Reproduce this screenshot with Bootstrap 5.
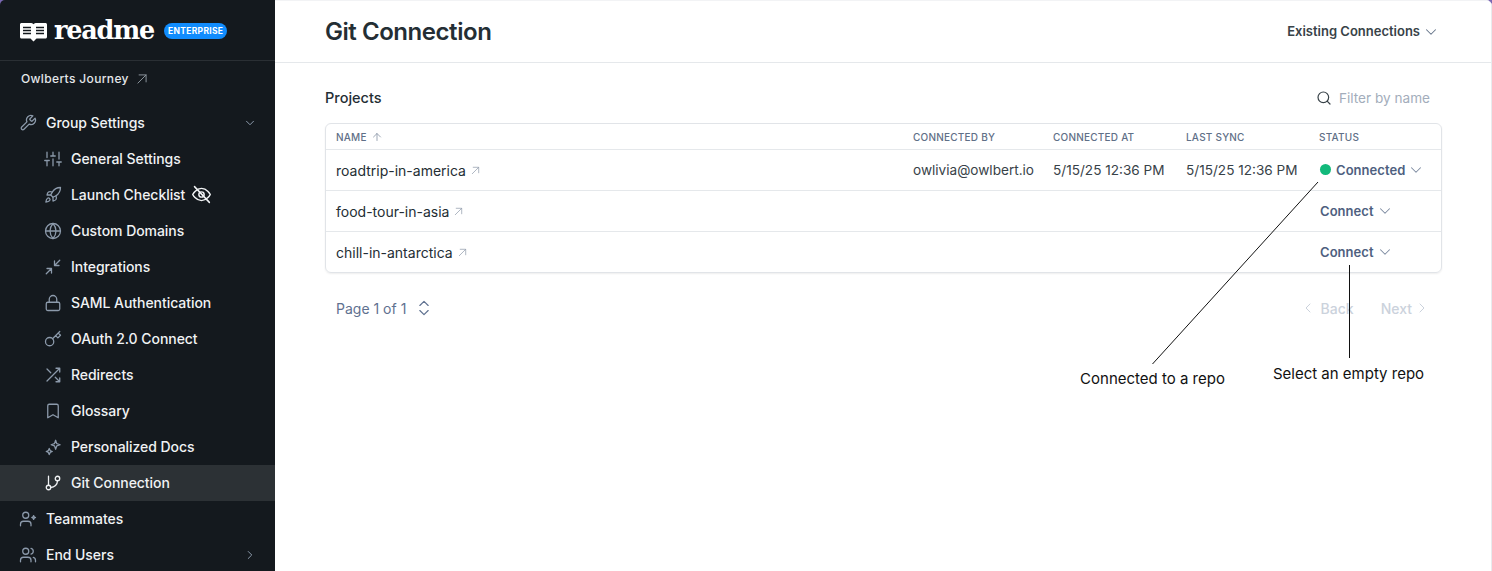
<!DOCTYPE html>
<html lang="en">
<head>
<meta charset="utf-8">
<title>Git Connection</title>
<link href="https://cdn.jsdelivr.net/npm/bootstrap@5.3.0/dist/css/bootstrap.min.css" rel="stylesheet">
<style>
html,body{height:100%;overflow:hidden}
body{background:#7a68b3;font-family:Inter,"Liberation Sans",sans-serif;color:#242e34}
.ico{width:18px;height:18px;fill:none;stroke:currentColor;stroke-width:1.7;stroke-linecap:round;stroke-linejoin:round;flex:none}
.shell{height:571px;border-top-right-radius:6px;border-top-left-radius:5px;overflow:hidden}
.side{width:275px;flex:none;background:#14191e;color:#f0f2f4}
.brandbar{height:61px;padding:3px 20px 0;border-bottom:1px solid #2a2f34;flex:none}
.wordmark{font-family:"DejaVu Serif",serif;font-weight:700;font-size:25.5px;line-height:1;color:#fff;letter-spacing:-1.2px;margin-left:7px;margin-top:-2px}
.entpill{background:#118cfd;font-size:8.5px;font-weight:700;letter-spacing:.3px;padding:4px;margin-left:10px;line-height:8px;margin-top:-2px}
.grouplink{height:44px;padding:0 21px 9px;font-size:12px;font-weight:500;letter-spacing:.35px;color:#e4e7ea;flex:none}
.grouplink .ico{width:14px;height:14px;color:#8b949c;margin-left:6px}
.sidenav{flex:none}
.sideitem{height:36px;font-size:14px;font-weight:500;color:#f0f2f4;text-decoration:none;padding:0 18px 1px 19px;gap:9px;letter-spacing:-.05px}
.sideitem:hover{color:#fff}
.sideitem>.ico{color:#8c9aab}
.sideitem>.tail{width:14px;height:14px;margin-left:auto;color:#8c9aab}
.subitem{padding-left:44px}
.sideitem.current{background:#2c3135}
.sideitem.current>.ico{color:#f0f2f4}
.sideitem>.eyeoff{color:#f0f2f4;margin-left:-3px;width:21px;height:21px}
.panel{background:#fff;border-right:1px solid #e8ebee;border-top:1px solid #f2f3f5;min-width:0}
.headbar{height:62px;padding:0 51px 0 50px;border-bottom:1px solid #e5e8eb}
.pagetitle{font-size:24px;font-weight:600;line-height:1;color:#242e34;margin:0;letter-spacing:-.45px}
.existing{font-size:13px;font-weight:600;color:#384248;letter-spacing:0;padding:0;border:0;background:none}
.existing .ico{margin-left:2px;color:#637288;stroke-width:1.4}
.bodyarea{padding:0 50px;position:relative;height:508px}
.toolbar{height:60px;padding-right:11px;padding-top:10px}
.projects{font-size:14.5px;font-weight:500;color:#242e34}
.filterbox{font-size:13.6px;color:#a3adbb}
.filterbox .ico{color:#384248;width:16px;height:16px;margin-right:7px;stroke-width:1.8}
.tablewrap{border:1px solid #e1e4e8;border-radius:6px;box-shadow:0 1px 2px rgba(0,0,0,.07);overflow:hidden;height:150px;width:1117px}
.repotable{table-layout:fixed;margin:0;width:100%}
.repotable th,.repotable td{padding:2px 10px 0;vertical-align:middle;border-bottom:1px solid #e5e8eb;box-shadow:none;white-space:nowrap}
.repotable tr:last-child td{border-bottom:0}
.repotable th{height:25px;padding-top:2px;font-size:10px;font-weight:500;letter-spacing:.22px;color:#5f6f87;text-transform:uppercase}
.repotable th .ico{width:12px;height:12px;margin-left:4px;vertical-align:-2px;color:#8c97a8}
.repotable td{height:41px;font-size:13.6px;color:#384248}
.repotable td.repo{color:#242e34;font-size:14px}
.repo .ico{width:11px;height:11px;margin-left:4px;color:#98a2b0;vertical-align:0}
.repotable td.statuscell{font-size:13px;font-weight:600;color:#4e5f80;letter-spacing:.05px;padding-left:11px}
.statuscell .ico{margin-left:2px;color:#7c8aa0;stroke-width:1.4;vertical-align:-4px}
.dot{width:11px;height:11px;border-radius:50%;background:#12b97b;margin-right:5px;display:inline-block}
.pager{height:70px;font-size:14px;padding:0 11px;color:#5f7190}
.pager .updown{width:20px;height:20px;margin-left:8px;color:#5f7190;stroke-width:1.4}
.pagerbtns{color:#cbd2dc;font-weight:500;gap:27px}
.pagerbtns .ico{width:16px;height:16px;stroke-width:1.5}
.backtext{margin-left:5px}
.nexttext{margin-right:2px}
.callouts{position:absolute;left:-275px;top:-63px;width:1492px;height:571px;pointer-events:none}
.calloutlabel{position:absolute;font-size:15px;color:#111;transform:translateX(-50%);white-space:nowrap;line-height:18px}
.labelone{left:1152.5px;top:370px}
.labeltwo{left:1348.5px;top:365px}
.colname{width:577px}.colby{width:140px}.colat{width:133px}.colsync{width:133px}.colstatus{width:132px}
</style>
</head>
<body>
<svg width="0" height="0" class="position-absolute">
<symbol id="i-wrench" viewBox="0 0 24 24"><path d="M14.7 6.3a1 1 0 0 0 0 1.4l1.6 1.6a1 1 0 0 0 1.4 0l3.77-3.77a6 6 0 0 1-7.94 7.94l-6.91 6.91a2.12 2.12 0 0 1-3-3l6.91-6.91a6 6 0 0 1 7.94-7.94l-3.76 3.76z"/></symbol>
<symbol id="i-sliders" viewBox="0 0 24 24"><path d="M4 21v-7M4 10V3M12 21v-9M12 8V3M20 21v-5M20 12V3M1 14h6M9 8h6M17 16h6"/></symbol>
<symbol id="i-rocket" viewBox="0 0 24 24"><path d="M4.5 16.5c-1.5 1.26-2 5-2 5s3.74-.5 5-2c.71-.84.7-2.13-.09-2.91a2.18 2.18 0 0 0-2.91-.09z"/><path d="m12 15-3-3a22 22 0 0 1 2-3.95A12.88 12.88 0 0 1 22 2c0 2.72-.78 7.5-6 11a22.35 22.35 0 0 1-4 2z"/><path d="M9 12H4s.55-3.03 2-4c1.62-1.08 5 0 5 0M12 15v5s3.03-.55 4-2c1.08-1.62 0-5 0-5"/></symbol>
<symbol id="i-eyeoff" viewBox="0 0 24 24"><path d="M2 12s3.5-7 10-7 10 7 10 7-3.5 7-10 7-10-7-10-7z"/><circle cx="12" cy="12" r="3"/><path d="M4 3l17 18"/></symbol>
<symbol id="i-globe" viewBox="0 0 24 24"><circle cx="12" cy="12" r="10"/><path d="M2 12h20M12 2a15.3 15.3 0 0 1 4 10 15.3 15.3 0 0 1-4 10 15.3 15.3 0 0 1-4-10 15.3 15.3 0 0 1 4-10z"/></symbol>
<symbol id="i-compress" viewBox="0 0 24 24"><path d="M4 14h6v6M20 10h-6V4M14 10l7-7M3 21l7-7"/></symbol>
<symbol id="i-lock" viewBox="0 0 24 24"><rect x="3" y="11" width="18" height="11" rx="2"/><path d="M7 11V7a5 5 0 0 1 10 0v4"/></symbol>
<symbol id="i-key" viewBox="0 0 24 24"><circle cx="7.5" cy="15.5" r="5.5"/><path d="m21 2-9.6 9.6M15.5 7.5l3 3L22 7l-3-3"/></symbol>
<symbol id="i-shuffle" viewBox="0 0 24 24"><path d="M16 3h5v5M4 20 21 3M21 16v5h-5M15 15l6 6M4 4l5 5"/></symbol>
<symbol id="i-bookmark" viewBox="0 0 24 24"><path d="m19 21-7-4-7 4V5a2 2 0 0 1 2-2h10a2 2 0 0 1 2 2z"/></symbol>
<symbol id="i-sparkles" viewBox="0 0 24 24"><path d="M15.5 3l1.5 4.5L21.5 9 17 10.5 15.5 15 14 10.5 9.500 9 14 7.500zM7 14l1.200 2.800L11 18l-2.800 1.200L7 22l-1.200-2.800L3 18l2.800-1.200z"/></symbol>
<symbol id="i-branch" viewBox="0 0 24 24"><path d="M6 3v12M18 9a9 9 0 0 1-9 9"/><circle cx="18" cy="6" r="3"/><circle cx="6" cy="18" r="3"/></symbol>
<symbol id="i-userstar" viewBox="0 0 24 24"><path d="M16 21v-2a4 4 0 0 0-4-4H6a4 4 0 0 0-4 4v2"/><circle cx="9" cy="7" r="4"/><path d="M19.500 7.500l.8 1.700 1.700.8-1.700.8-.8 1.700-.8-1.700-1.700-.8 1.700-.8z"/></symbol>
<symbol id="i-users" viewBox="0 0 24 24"><path d="M16 21v-2a4 4 0 0 0-4-4H6a4 4 0 0 0-4 4v2"/><circle cx="9" cy="7" r="4"/><path d="M22 21v-2a4 4 0 0 0-3-3.870M16 3.130a4 4 0 0 1 0 7.750"/></symbol>
<symbol id="i-down" viewBox="0 0 24 24"><path d="m6 9 6 6 6-6"/></symbol>
<symbol id="i-right" viewBox="0 0 24 24"><path d="m9 18 6-6-6-6"/></symbol>
<symbol id="i-left" viewBox="0 0 24 24"><path d="m15 18-6-6 6-6"/></symbol>
<symbol id="i-ne" viewBox="0 0 24 24"><path d="M5 19 19 5M7 5h12v12"/></symbol>
<symbol id="i-up" viewBox="0 0 24 24"><path d="m5 12 7-7 7 7M12 19V5"/></symbol>
<symbol id="i-search" viewBox="0 0 24 24"><circle cx="11" cy="11" r="8"/><path d="m21 21-4.300-4.300"/></symbol>
<symbol id="i-updown" viewBox="0 0 24 24"><path d="m7 15 5 5 5-5M7 9l5-5 5 5"/></symbol>
</svg>

<div class="shell d-flex">
  <aside class="side d-flex flex-column">
    <div class="brandbar d-flex align-items-center">
      <svg width="27" height="20" viewBox="0 0 27 20" class="flex-shrink-0" aria-hidden="true">
        <path d="M1.500 1h8.500c1.700 0 3 .5 3.500 1.300C14 1.500 15.300 1 17 1h8.500c.8 0 1.500.7 1.500 1.500V15c0 .8-.7 1.500-1.500 1.500H16.500L13.500 19.500 10.500 16.500H1.500C.7 16.500 0 15.800 0 15V2.500C0 1.700.7 1 1.500 1z" fill="#fff"/>
        <path d="M3 5.500h8M3 8.500h8M3 11.500h8M16 5.500h8M16 8.500h8M16 11.500h8" stroke="#14191e" stroke-width="1.500"/>
      </svg>
      <span class="wordmark">readme</span>
      <span class="badge rounded-pill entpill">ENTERPRISE</span>
    </div>
    <div class="grouplink d-flex align-items-center">Owlberts Journey<svg class="ico"><use href="#i-ne"/></svg></div>
    <nav class="sidenav d-flex flex-column">
      <a class="sideitem d-flex align-items-center" href="#"><svg class="ico"><use href="#i-wrench"/></svg>Group Settings<svg class="ico tail"><use href="#i-down"/></svg></a>
      <a class="sideitem subitem d-flex align-items-center" href="#"><svg class="ico"><use href="#i-sliders"/></svg>General Settings</a>
      <a class="sideitem subitem d-flex align-items-center" href="#"><svg class="ico"><use href="#i-rocket"/></svg>Launch Checklist<svg class="ico eyeoff"><use href="#i-eyeoff"/></svg></a>
      <a class="sideitem subitem d-flex align-items-center" href="#"><svg class="ico"><use href="#i-globe"/></svg>Custom Domains</a>
      <a class="sideitem subitem d-flex align-items-center" href="#"><svg class="ico"><use href="#i-compress"/></svg>Integrations</a>
      <a class="sideitem subitem d-flex align-items-center" href="#"><svg class="ico"><use href="#i-lock"/></svg>SAML Authentication</a>
      <a class="sideitem subitem d-flex align-items-center" href="#"><svg class="ico"><use href="#i-key"/></svg>OAuth 2.0 Connect</a>
      <a class="sideitem subitem d-flex align-items-center" href="#"><svg class="ico"><use href="#i-shuffle"/></svg>Redirects</a>
      <a class="sideitem subitem d-flex align-items-center" href="#"><svg class="ico"><use href="#i-bookmark"/></svg>Glossary</a>
      <a class="sideitem subitem d-flex align-items-center" href="#"><svg class="ico"><use href="#i-sparkles"/></svg>Personalized Docs</a>
      <a class="sideitem subitem current d-flex align-items-center" href="#"><svg class="ico"><use href="#i-branch"/></svg>Git Connection</a>
      <a class="sideitem d-flex align-items-center" href="#"><svg class="ico"><use href="#i-userstar"/></svg>Teammates</a>
      <a class="sideitem d-flex align-items-center" href="#"><svg class="ico"><use href="#i-users"/></svg>End Users<svg class="ico tail"><use href="#i-right"/></svg></a>
    </nav>
  </aside>
  <main class="panel flex-grow-1">
    <header class="headbar d-flex align-items-center justify-content-between">
      <h1 class="pagetitle">Git Connection</h1>
      <button class="existing d-flex align-items-center" type="button">Existing Connections<svg class="ico"><use href="#i-down"/></svg></button>
    </header>
    <section class="bodyarea">
      <div class="toolbar d-flex align-items-center justify-content-between">
        <div class="projects">Projects</div>
        <div class="filterbox d-flex align-items-center"><svg class="ico"><use href="#i-search"/></svg>Filter by name</div>
      </div>
      <div class="tablewrap">
        <table class="table repotable">
          <colgroup><col class="colname"><col class="colby"><col class="colat"><col class="colsync"><col class="colstatus"></colgroup>
          <thead><tr><th>Name<svg class="ico"><use href="#i-up"/></svg></th><th>Connected By</th><th>Connected At</th><th>Last Sync</th><th>Status</th></tr></thead>
          <tbody>
            <tr><td class="repo">roadtrip-in-america<svg class="ico"><use href="#i-ne"/></svg></td><td>owlivia@owlbert.io</td><td>5/15/25 12:36 PM</td><td>5/15/25 12:36 PM</td><td class="statuscell"><span class="dot"></span>Connected<svg class="ico"><use href="#i-down"/></svg></td></tr>
            <tr><td class="repo">food-tour-in-asia<svg class="ico"><use href="#i-ne"/></svg></td><td></td><td></td><td></td><td class="statuscell">Connect<svg class="ico"><use href="#i-down"/></svg></td></tr>
            <tr><td class="repo">chill-in-antarctica<svg class="ico"><use href="#i-ne"/></svg></td><td></td><td></td><td></td><td class="statuscell">Connect<svg class="ico"><use href="#i-down"/></svg></td></tr>
          </tbody>
        </table>
      </div>
      <div class="pager d-flex align-items-center justify-content-between">
        <div class="d-flex align-items-center">Page 1 of 1<svg class="ico updown"><use href="#i-updown"/></svg></div>
        <div class="pagerbtns d-flex align-items-center">
          <span class="d-flex align-items-center"><svg class="ico"><use href="#i-left"/></svg><span class="backtext">Back</span></span>
          <span class="d-flex align-items-center"><span class="nexttext">Next</span><svg class="ico"><use href="#i-right"/></svg></span>
        </div>
      </div>
      <div class="callouts">
        <svg width="1492" height="571" class="d-block" aria-hidden="true">
          <path d="M1318 182 1152.500 364" stroke="#111" stroke-width="1" fill="none"/>
          <path d="M1349.500 265V358" stroke="#111" stroke-width="1" fill="none"/>
        </svg>
        <div class="calloutlabel labelone">Connected to a repo</div>
        <div class="calloutlabel labeltwo">Select an empty repo</div>
      </div>
    </section>
  </main>
</div>
<script src="https://cdn.jsdelivr.net/npm/bootstrap@5.3.0/dist/js/bootstrap.bundle.min.js"></script>
</body>
</html>
